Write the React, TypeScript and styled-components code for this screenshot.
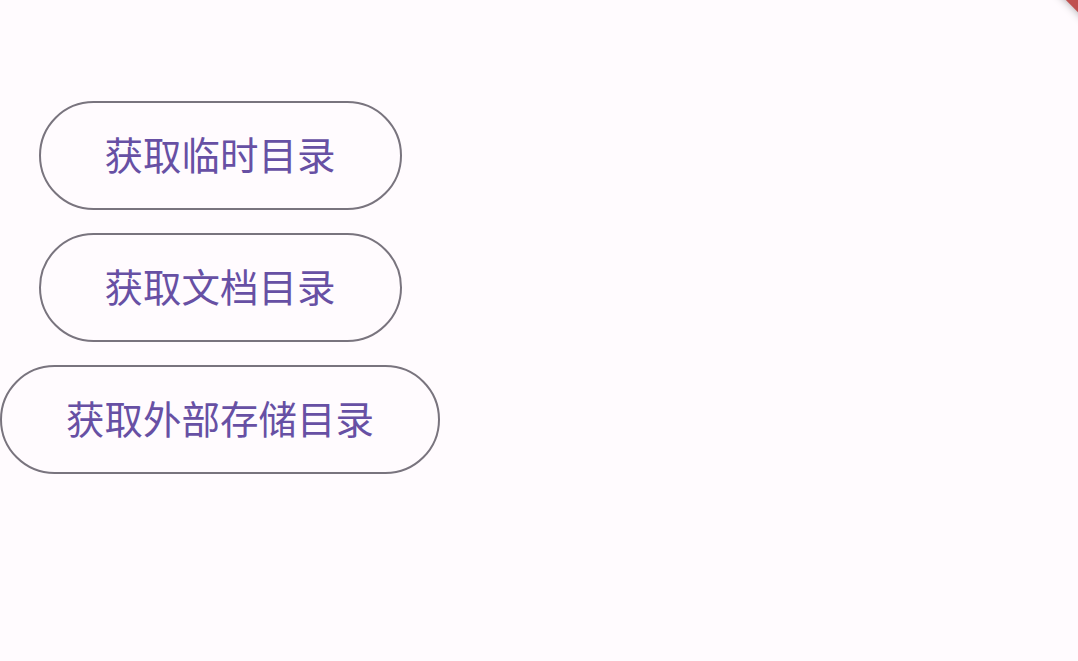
import React from "react";
import { createGlobalStyle, styled } from "styled-components";

const GlobalStyle = createGlobalStyle`
  html, body {
    margin: 0;
    padding: 0;
    background: #fffbfe;
    font-family: Roboto, "Noto Sans CJK SC", sans-serif;
  }
`;

const labels = ["获取临时目录", "获取文档目录", "获取外部存储目录"];

const App = () => {
  return (
    <>
      <GlobalStyle />
      <Page>
        <Column>
          {labels.map((label) => (
            <OutlinedButton key={label} type="button">
              {label}
            </OutlinedButton>
          ))}
        </Column>
        <DebugBanner />
      </Page>
    </>
  );
};
export default App;

const Page = styled.div`
  position: relative;
  width: 1078px;
  height: 661px;
  overflow: hidden;
  background: #fffbfe;
`;

const Column = styled.div`
  display: inline-flex;
  flex-direction: column;
  align-items: center;
  gap: 23px;
  padding-top: 100.5px;
`;

const OutlinedButton = styled.button`
  box-sizing: border-box;
  height: 109px;
  padding: 5px 64px 0;
  border: 2.5px solid #79747e;
  border-radius: 55px;
  background: transparent;
  color: #6750a4;
  font-family: Roboto, "Noto Sans CJK SC", sans-serif;
  font-size: 38.5px;
  font-weight: 400;
  letter-spacing: 0;
  line-height: 1;
  white-space: nowrap;
  cursor: pointer;
`;

const DebugBanner = styled.div`
  position: absolute;
  left: 1029px;
  top: -11px;
  width: 100px;
  height: 20px;
  background: #c0504f;
  transform: rotate(45deg);
  box-shadow: 0 0 8px rgba(0, 0, 0, 0.35);
`;
